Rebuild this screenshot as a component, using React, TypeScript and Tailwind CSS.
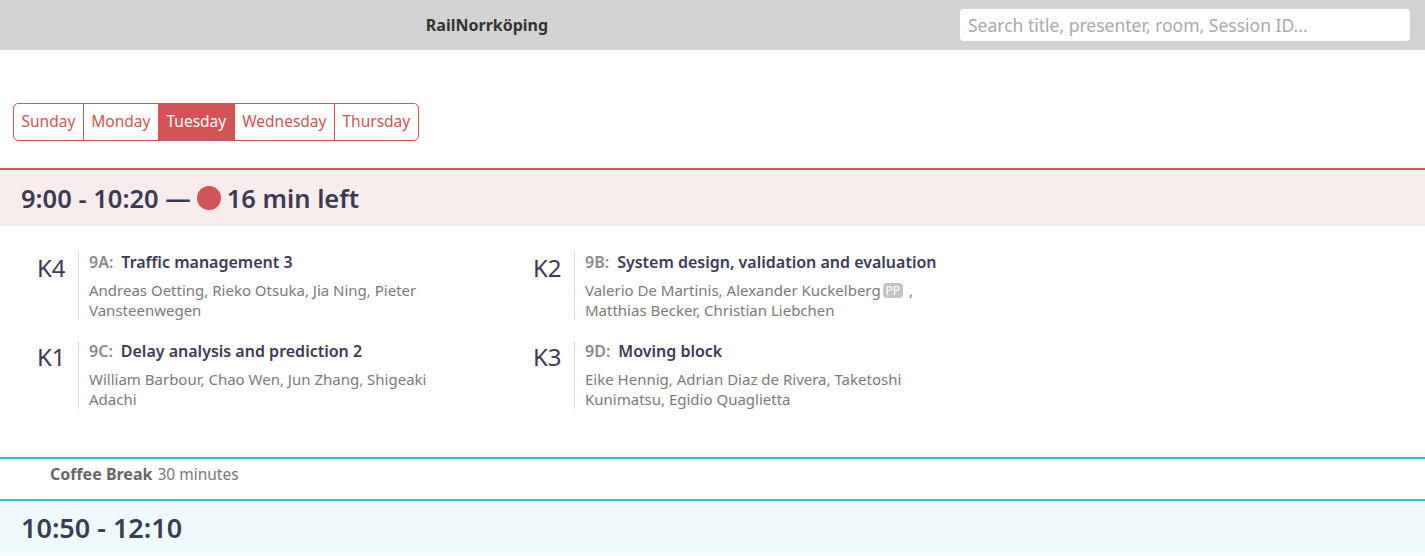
import React from "react";

const days = ["Sunday", "Monday", "Tuesday", "Wednesday", "Thursday"];

type S = { room: string; id: string; title: string; authors: React.ReactNode };

const sessions: S[] = [
  { room: "K4", id: "9A", title: "Traffic management 3", authors: "Andreas Oetting, Rieko Otsuka, Jia Ning, Pieter Vansteenwegen" },
  {
    room: "K2",
    id: "9B",
    title: "System design, validation and evaluation",
    authors: (
      <>
        <span>Valerio De Martinis, Alexander Kuckelberg</span>
        <span className="mx-[2px] inline-block rounded-[4px] bg-[#c4c4c4] px-[3px] text-[12px] leading-[15px] text-white align-[1px]">PP</span>
        <span> ,</span> <span>Matthias Becker, Christian Liebchen</span>
      </>
    ),
  },
  { room: "K1", id: "9C", title: "Delay analysis and prediction 2", authors: "William Barbour, Chao Wen, Jun Zhang, Shigeaki Adachi" },
  { room: "K3", id: "9D", title: "Moving block", authors: "Eike Hennig, Adrian Diaz de Rivera, Taketoshi Kunimatsu, Egidio Quaglietta" },
];

function Session({ s }: { s: S }) {
  return (
    <div className="flex items-start">
      <div className="w-[41px] text-[24px] leading-[32px] text-[#3d3a56]">{s.room}</div>
      <div className="flex-1 border-l border-[#d9d9d9] pl-[10px]">
        <div className="mb-[8px] max-w-[390px] text-[16px] leading-[20px] font-semibold text-[#3d3a56]">
          <span className="mr-[8px] text-[#8a8a8a]">{s.id}:</span>
          {s.title}
        </div>
        <div className="max-w-[385px] text-[15px] leading-[20px] text-[#7a7a7a]">{s.authors}</div>
      </div>
    </div>
  );
}

export default function App() {
  return (
    <div className="w-[1425px] min-h-[556px] bg-white" style={{ fontFamily: '"Noto Sans", sans-serif' }}>
      <header className="flex h-[50px] items-center bg-[#d3d3d3]">
        <div className="flex-1 pl-[14px] text-center text-[16px] font-bold text-[#333]">RailNorrköping</div>
        <input
          className="mr-[15px] h-[32px] w-[450px] rounded-[4px] bg-white px-[8px] text-[17.5px] text-[#333] outline-none placeholder:text-[#a9a9a9]"
          placeholder="Search title, presenter, room, Session ID..."
        />
      </header>

      <div className="pl-[13px] pt-[53px] pb-[27px]">
        <div className="inline-flex h-[38px] overflow-hidden rounded-[5px] border border-[#d35455]">
          {days.map((d, i) => (
            <div
              key={d}
              className={
                "flex items-center px-[7.5px] text-[15.5px] " +
                (i > 0 ? "border-l border-[#d35455] " : "") +
                (d === "Tuesday" ? "bg-[#d35455] text-white" : "text-[#d35455]")
              }
            >
              {d}
            </div>
          ))}
        </div>
      </div>

      <div className="flex h-[58px] items-center border-t-2 border-[#d35455] bg-[#f9ecec] pl-[21px]">
        <div className="flex items-center text-[25.5px] font-semibold text-[#3d3a56]">
          9:00 - 10:20 —
          <span className="mx-[6px] inline-block h-[24px] w-[24px] rounded-full bg-[#d35455]" />
          16 min left
        </div>
      </div>

      <div className="grid grid-cols-[496px_496px] gap-y-[21px] pl-[37px] pt-[26px] pb-[48px]">
        {sessions.map((s) => (
          <Session key={s.id} s={s} />
        ))}
      </div>

      <div className="h-[42px] border-t-2 border-[#2dc1d0] pl-[50px] pt-[5px] text-[15.5px] leading-[20px]">
        <span className="text-[16px] font-bold text-[#666]">Coffee Break</span>
        <span className="ml-[5px] text-[#777]">30 minutes</span>
      </div>

      <div className="flex h-[56px] items-center border-t-2 border-[#2dc1d0] bg-[#eefafb] pl-[21px]">
        <div className="text-[27px] font-semibold text-[#3d3a56]">10:50 - 12:10</div>
      </div>
    </div>
  );
}
